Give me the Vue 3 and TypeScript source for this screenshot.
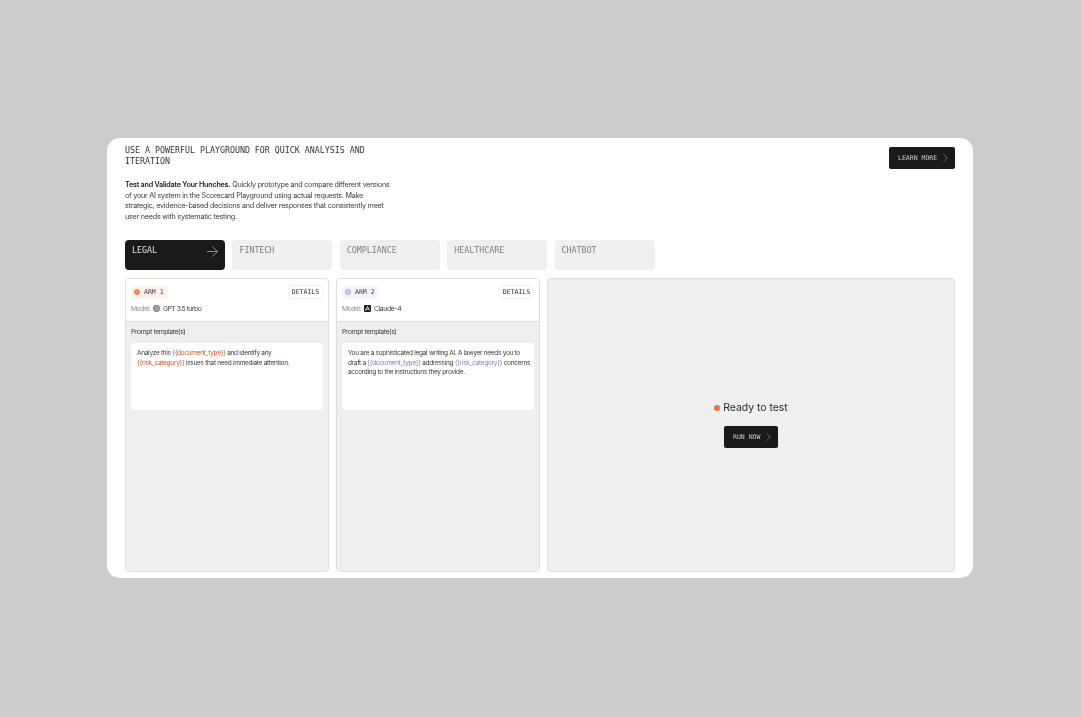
<script setup lang="ts">
interface Arm {
  name: string;
  tone: string;
  model: string;
  icon: string;
  parts: { text: string; token?: boolean }[];
}

const tabs = ['LEGAL', 'FINTECH', 'COMPLIANCE', 'HEALTHCARE', 'CHATBOT'];

const arms: Arm[] = [
  {
    name: 'ARM 1',
    tone: 'orange',
    model: 'GPT 3.5 turbo',
    icon: 'gpt',
    parts: [
      { text: 'Analyze this ' },
      { text: '{{document_type}}', token: true },
      { text: ' and identify any ' },
      { text: '{{risk_category}}', token: true },
      { text: ' issues that need immediate attention.' },
    ],
  },
  {
    name: 'ARM 2',
    tone: 'blue',
    model: 'Claude-4',
    icon: 'claude',
    parts: [
      { text: 'You are a sophisticated legal writing AI. A lawyer needs you to draft a ' },
      { text: '{{document_type}}', token: true },
      { text: ' addressing ' },
      { text: '{{risk_category}}', token: true },
      { text: ' concerns according to the instructions they provide.' },
    ],
  },
];
</script>

<template>
  <div class="page">
    <main class="card">
      <header class="top">
        <div class="intro">
          <h1>USE A POWERFUL PLAYGROUND FOR QUICK ANALYSIS AND ITERATION</h1>
          <p>
            <strong>Test and Validate Your Hunches.</strong>
            Quickly prototype and compare different versions of your AI system in the Scorecard
            Playground using actual requests. Make strategic, evidence-based decisions and deliver
            responses that consistently meet user needs with systematic testing.
          </p>
        </div>
        <button class="action learn">
          LEARN MORE
          <svg width="5" height="8" viewBox="0 0 5 8" fill="none">
            <path d="M.7.5 4.200 4 .7 7.500" stroke="#a9a9a6" stroke-width=".8" stroke-dasharray="1.300 .5" />
          </svg>
        </button>
      </header>

      <nav class="tabs">
        <button v-for="(tab, i) in tabs" :key="tab" class="tab" :class="{ active: i === 0 }">
          {{ tab }}
          <svg v-if="i === 0" width="12" height="11" viewBox="0 0 12 11" fill="none">
            <path d="M1 5.500h10.200M6.400.6l4.900 4.900-4.900 4.900" stroke="#c4c4c1" stroke-width=".7" />
          </svg>
        </button>
      </nav>

      <section class="panels">
        <article v-for="arm in arms" :key="arm.name" class="arm" :class="arm.tone">
          <div class="arm-head">
            <div class="arm-row">
              <span class="badge"><i class="dot"></i>{{ arm.name }}</span>
              <button class="details">DETAILS</button>
            </div>
            <div class="model">
              <span class="label">Model:</span>
              <svg v-if="arm.icon === 'gpt'" width="7" height="7" viewBox="0 0 8 8">
                <circle cx="4" cy="4" r="3.900" fill="#70767a" />
                <g fill="none" stroke="#d4d7d9" stroke-width=".45">
                  <ellipse cx="4" cy="4" rx="1.300" ry="2.900" />
                  <ellipse cx="4" cy="4" rx="1.300" ry="2.900" transform="rotate(60 4 4)" />
                  <ellipse cx="4" cy="4" rx="1.300" ry="2.900" transform="rotate(120 4 4)" />
                </g>
              </svg>
              <span v-else class="claude-icon">
                <svg width="5" height="5" viewBox="0 0 5 5">
                  <path d="M.4 4.600 2.500.4 4.600 4.600M1.200 3.200H3.800" fill="none" stroke="#fff" stroke-width=".8" />
                </svg>
              </span>
              <span class="model-name">{{ arm.model }}</span>
            </div>
          </div>
          <div class="arm-body">
            <div class="prompt-label">Prompt template(s)</div>
            <div class="prompt">
              <template v-for="part in arm.parts" :key="part.text">
                <span v-if="part.token" class="token">{{ part.text }}</span>
                <template v-else>{{ part.text }}</template>
              </template>
            </div>
          </div>
        </article>

        <aside class="results">
          <div class="ready"><i class="ready-dot"></i>Ready to test</div>
          <button class="action run">
            RUN NOW
            <svg width="5" height="8" viewBox="0 0 5 8" fill="none">
              <path d="M.7.5 4.200 4 .7 7.500" stroke="#a9a9a6" stroke-width=".8" stroke-dasharray="1.300 .5" />
            </svg>
          </button>
        </aside>
      </section>
    </main>
  </div>
</template>

<style>
html,
body {
  margin: 0;
  background: #cccccc;
}
</style>

<style scoped>
.page {
  min-height: 717px;
  box-sizing: border-box;
  padding: 138px 108px 139px 107px;
  font-family: Inter, "Liberation Sans", sans-serif;
  color: #1a1a18;
  will-change: transform;
}

.card {
  height: 440px;
  box-sizing: border-box;
  background: #fff;
  border-radius: 13px;
  padding: 7px 18px 6.500px;
  display: flex;
  flex-direction: column;
}

.top {
  display: flex;
  justify-content: space-between;
  align-items: flex-start;
}

.intro {
  width: 268px;
}

h1 {
  margin: 0;
  font-family: "DejaVu Sans Mono", monospace;
  font-size: 8.300px;
  font-weight: 400;
  line-height: 11px;
  width: 250px;
  color: #33332f;
}

p {
  margin: 13px 0 0;
  font-size: 7.200px;
  line-height: 10.600px;
  letter-spacing: -0.23px;
  color: #3a3a36;
}

strong {
  font-weight: 600;
  color: #1c1c1a;
}

.action {
  background: #1a1a18;
  color: #cfcfcb;
  border: 0;
  border-radius: 2px;
  font-family: "DejaVu Sans Mono", monospace;
  font-size: 6.500px;
  display: flex;
  align-items: center;
  justify-content: flex-start;
  gap: 6px;
  padding: 0 0 0 9px;
}

.learn {
  width: 66px;
  height: 22px;
  margin-top: 2px;
}

.tabs {
  display: flex;
  gap: 7.400px;
  margin-top: 18px;
}

.tab {
  width: 100px;
  height: 30px;
  box-sizing: border-box;
  border: 0;
  border-radius: 4px;
  background: #efefef;
  color: #7d7d7a;
  font-family: "DejaVu Sans Mono", monospace;
  font-size: 8.300px;
  text-align: left;
  padding: 5px 7px 0;
  display: flex;
  justify-content: space-between;
  align-items: flex-start;
}

.tab svg {
  margin-top: 1px;
}

.tab.active {
  background: #1a1a18;
  color: #e2e2de;
}

.panels {
  flex: 1;
  display: grid;
  grid-template-columns: 204px 204px 1fr;
  gap: 7px;
  margin-top: 8px;
  min-height: 0;
}

.arm {
  display: flex;
  flex-direction: column;
  border: 1px solid #dcdcdc;
  border-radius: 4px;
  overflow: hidden;
}

.arm-head {
  height: 43px;
  box-sizing: border-box;
  padding: 6px 5px 0;
  border-bottom: 1px solid #dcdcdc;
  background: #fff;
}

.arm-row {
  display: flex;
  justify-content: space-between;
  align-items: center;
}

.badge {
  height: 13px;
  padding: 0 3px;
  display: flex;
  align-items: center;
  gap: 4px;
  border-radius: 3px;
  font-family: "DejaVu Sans Mono", monospace;
  font-size: 6.500px;
  color: #3a3a36;
}

.orange .badge {
  background: #fdf2ec;
}

.blue .badge {
  background: #f3f4fc;
}

.dot {
  width: 6px;
  height: 6px;
  border-radius: 50%;
  box-sizing: border-box;
}

.orange .dot {
  background: #f58a63;
  border: 1px solid #ef7a50;
}

.blue .dot {
  background: #c6cdf5;
  border: 1px solid #a9b3ee;
}

.details {
  height: 14px;
  width: 35px;
  padding: 0;
  background: #fff;
  border: 1px solid #f3f3f3;
  border-radius: 3px;
  font-family: "DejaVu Sans Mono", monospace;
  font-size: 6.500px;
  color: #2f2f2c;
}

.model {
  display: flex;
  align-items: center;
  margin-top: 5px;
  font-size: 6.800px;
  line-height: 9px;
  letter-spacing: -0.5px;
}

.label {
  color: #8a8a86;
  margin-right: 3px;
}

.claude-icon {
  width: 7px;
  height: 7px;
  background: #1f1f1d;
  border-radius: 1px;
  display: flex;
  align-items: center;
  justify-content: center;
}

.model-name {
  margin-left: 3px;
  color: #3a3a36;
}

.blue .model-name {
  letter-spacing: -0.35px;
}

.arm-body {
  flex: 1;
  background: #efefef;
  padding: 5px 5px 0;
}

.prompt-label {
  font-size: 6.800px;
  line-height: 9px;
  letter-spacing: -0.39px;
  color: #3a3a36;
}

.prompt {
  margin-top: 7px;
  height: 67px;
  box-sizing: border-box;
  background: #fff;
  border-radius: 3px;
  padding: 6px 4px 6px 6px;
  font-size: 6.500px;
  line-height: 9.500px;
  letter-spacing: -0.3px;
  color: #3a3a36;
}

.blue .prompt {
  padding-right: 2px;
}

.orange .token {
  color: #d0532a;
}

.blue .token {
  color: #7c7fb5;
}

.results {
  background: #efefef;
  border: 1px solid #dcdcdc;
  border-radius: 4px;
  display: flex;
  flex-direction: column;
  align-items: center;
  justify-content: center;
  gap: 11px;
}

.ready {
  display: flex;
  align-items: center;
  gap: 3px;
  font-size: 10.500px;
  line-height: 14px;
  letter-spacing: -0.05px;
  color: #2b2b28;
}

.ready-dot {
  width: 6px;
  height: 6px;
  border-radius: 50%;
  background: #f5703f;
}

.run {
  width: 54px;
  height: 22px;
}
</style>
